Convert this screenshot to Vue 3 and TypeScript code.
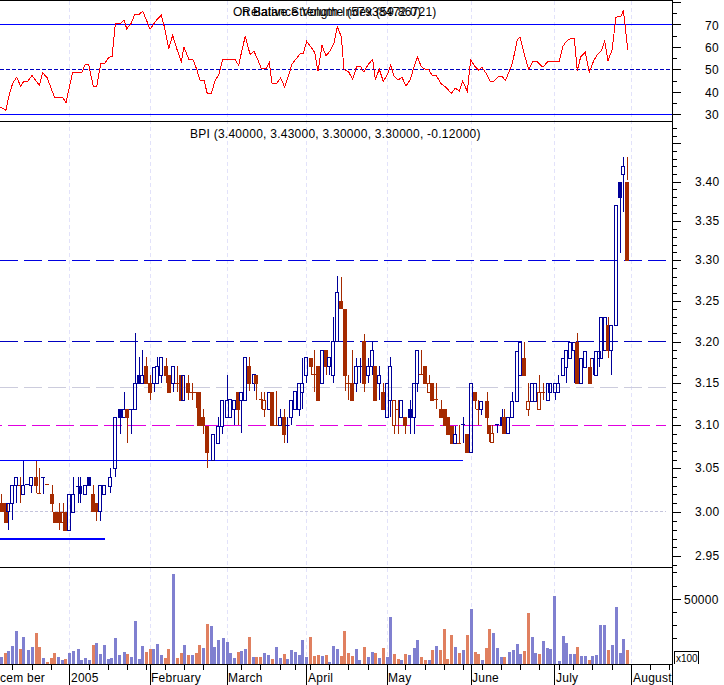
<script setup lang="ts">
type Row = [number, number, number, number, number, string]

const seg = (ox: number, oy: number, rows: Row[]) =>
  rows.map(([x, wt, wb, bt, bb, t]) => {
    const top = Math.round(oy + wt / 3)
    const bottom = Math.round(oy + wb / 3)
    const bodyTop = Math.round(oy + bt / 3)
    const bodyBottom = Math.round(oy + bb / 3)
    const hollow = t === 'h' || (t === 'o' && bodyBottom > bodyTop)
    const wicks = hollow
      ? [
          { y: top, h: bodyTop - top },
          { y: bodyBottom, h: bottom - bodyBottom },
        ].filter(w => w.h > 0)
      : [{ y: top, h: Math.max(1, bottom - top) }]
    return { x: Math.floor(ox + x / 3), bt: bodyTop, bb: bodyBottom, t, hollow, wicks }
  })

const candles = [
  ...seg(0, 330, [
    [3, 492, 544, 520, 544, 'b'], [14, 520, 575, 520, 544, 'b'], [20, 520, 575, 520, 575, 'b'], [26, 520, 600, 520, 544, 'h'],
    [37, 465, 570, 465, 520, 'h'], [48, 440, 520, 440, 465, 'h'], [60, 440, 518, 465, 465, 'o'], [70, 392, 493, 465, 493, 'h'],
    [82, 463, 465, 463, 465, 'n'], [95, 440, 490, 440, 465, 'h'], [109, 392, 490, 440, 465, 'b'], [118, 415, 490, 490, 490, 'o'],
    [129, 440, 493, 440, 440, 'n'], [141, 463, 463, 463, 463, 'o'], [158, 465, 545, 492, 518, 'b'], [165, 545, 575, 545, 575, 'b'],
    [177, 518, 600, 545, 575, 'b'], [190, 518, 575, 545, 575, 'o'], [197, 545, 600, 545, 600, 'b'], [208, 492, 600, 492, 600, 'h'],
    [220, 440, 545, 492, 545, 'h'], [235, 440, 518, 468, 468, 'n'], [242, 440, 518, 468, 490, 'f'], [255, 465, 493, 465, 493, 'h'],
    [267, 441, 465, 441, 465, 'f'], [280, 465, 544, 492, 544, 'b'], [289, 518, 572, 518, 544, 'b'], [300, 465, 572, 465, 544, 'h'],
    [312, 465, 493, 465, 493, 'h'], [332, 415, 490, 440, 467, 'h'], [345, 260, 440, 260, 415, 'h'], [360, 238, 312, 238, 260, 'f'],
    [373, 186, 262, 238, 260, 'h'], [382, 238, 338, 238, 260, 'b'], [394, 238, 312, 238, 238, 'n'], [405, 10, 238, 158, 238, 'h'],
    [419, 82, 158, 136, 158, 'f'], [427, 60, 158, 136, 158, 'h'], [438, 82, 158, 108, 158, 'b'], [452, 136, 210, 158, 185, 'b'],
    [464, 110, 185, 110, 158, 'h'], [471, 82, 158, 108, 158, 'h'], [484, 82, 158, 82, 135, 'h'], [500, 85, 158, 108, 135, 'b'],
    [507, 135, 185, 135, 185, 'b'], [519, 108, 185, 108, 158, 'h'], [532, 108, 185, 158, 158, 'o'], [545, 136, 210, 136, 210, 'b'],
    [551, 136, 210, 136, 210, 'h'], [564, 136, 210, 158, 185, 'b'], [577, 158, 210, 185, 185, 'o'], [590, 185, 235, 185, 185, 'o'],
    [598, 185, 285, 185, 285, 'b'], [610, 236, 312, 262, 285, 'b'], [623, 287, 413, 287, 365, 'b'], [640, 312, 390, 312, 390, 'h'],
    [655, 262, 338, 287, 338, 'h'], [668, 210, 312, 210, 287, 'h'], [683, 136, 260, 210, 260, 'h'], [690, 208, 262, 208, 262, 'h'],
    [703, 210, 285, 210, 238, 'h'], [716, 185, 285, 185, 236, 'b'],
  ]),
  ...seg(240, 270, [
    [3, 365, 490, 365, 390, 'h'], [15, 262, 390, 262, 390, 'h'], [29, 262, 362, 288, 338, 'b'], [43, 313, 362, 313, 338, 'h'],
    [50, 315, 390, 315, 338, 'b'], [63, 365, 416, 388, 388, 'o'], [72, 365, 440, 390, 418, 'o'], [88, 365, 418, 365, 418, 'h'],
    [96, 365, 465, 365, 465, 'b'], [108, 362, 465, 465, 465, 'o'], [120, 418, 465, 440, 465, 'h'], [133, 418, 518, 440, 492, 'b'],
    [141, 440, 518, 465, 465, 'n'], [153, 390, 465, 390, 440, 'h'], [165, 364, 418, 364, 418, 'h'], [177, 340, 438, 340, 418, 'h'],
    [187, 264, 418, 338, 365, 'h'], [199, 262, 338, 262, 316, 'h'], [213, 264, 316, 264, 288, 'b'], [223, 240, 365, 313, 313, 'o'],
    [234, 288, 390, 288, 390, 'b'], [246, 240, 338, 240, 338, 'h'], [259, 240, 316, 240, 288, 'b'], [268, 262, 316, 262, 288, 'h'],
    [280, 140, 338, 214, 316, 'h'], [291, 18, 214, 67, 214, 'h'], [304, 22, 114, 93, 114, 'b'], [315, 117, 362, 117, 315, 'b'],
    [326, 315, 390, 338, 338, 'o'], [338, 240, 390, 340, 390, 'b'], [350, 264, 365, 288, 340, 'h'], [360, 264, 340, 288, 288, 'n'],
    [372, 192, 365, 214, 340, 'b'], [384, 264, 340, 288, 316, 'h'], [397, 214, 316, 240, 288, 'h'], [405, 288, 390, 288, 390, 'b'],
    [417, 288, 390, 316, 338, 'h'], [429, 338, 416, 365, 416, 'b'], [442, 338, 440, 338, 440, 'h'], [450, 262, 440, 288, 390, 'h'],
    [463, 390, 492, 390, 465, 'o'], [475, 390, 492, 416, 416, 'o'], [483, 390, 440, 390, 440, 'h'], [497, 440, 492, 440, 465, 'b'],
    [510, 390, 492, 418, 440, 'f'], [523, 338, 492, 338, 440, 'h'], [531, 240, 365, 240, 338, 'h'], [545, 240, 315, 313, 313, 'o'],
    [555, 288, 338, 288, 338, 'b'], [568, 315, 365, 338, 365, 'o'], [576, 338, 390, 338, 390, 'b'], [589, 338, 416, 388, 388, 'o'],
    [603, 390, 440, 418, 440, 'b'], [617, 418, 465, 418, 465, 'b'], [624, 440, 492, 440, 492, 'b'], [636, 467, 518, 467, 518, 'b'],
    [645, 467, 518, 492, 518, 'h'], [659, 465, 518, 518, 518, 'o'], [669, 440, 518, 463, 463, 'n'], [681, 492, 545, 492, 545, 'b'],
    [693, 338, 545, 338, 545, 'h'], [706, 365, 416, 365, 390, 'b'], [714, 390, 465, 416, 416, 'o'],
  ]),
  ...seg(480, 140, [
    [5, 782, 825, 782, 808, 'h'], [22, 755, 855, 782, 830, 'b'], [29, 855, 905, 855, 880, 'b'], [38, 855, 905, 880, 905, 'o'],
    [52, 855, 880, 853, 853, 'n'], [66, 808, 855, 832, 855, 'f'], [74, 808, 880, 832, 880, 'b'], [86, 830, 880, 830, 880, 'h'],
    [98, 757, 830, 782, 830, 'h'], [113, 632, 782, 632, 782, 'h'], [120, 605, 705, 605, 705, 'h'], [132, 605, 705, 655, 705, 'b'],
    [145, 728, 828, 782, 808, 'o'], [158, 728, 782, 728, 782, 'h'], [165, 728, 782, 728, 782, 'h'], [178, 705, 808, 755, 808, 'o'],
    [191, 728, 780, 755, 755, 'o'], [204, 728, 780, 728, 780, 'h'], [212, 728, 755, 728, 755, 'h'], [225, 728, 780, 728, 755, 'h'],
    [236, 705, 755, 730, 755, 'h'], [250, 655, 705, 655, 705, 'h'], [258, 630, 728, 630, 680, 'h'], [270, 605, 655, 605, 655, 'h'],
    [283, 605, 728, 605, 630, 'h'], [292, 580, 728, 605, 728, 'b'], [304, 655, 728, 655, 728, 'h'], [315, 632, 680, 632, 680, 'h'],
    [332, 655, 728, 680, 728, 'b'], [340, 655, 705, 655, 655, 'n'], [348, 632, 705, 632, 705, 'h'], [358, 632, 680, 632, 655, 'h'],
    [365, 532, 655, 532, 655, 'h'], [375, 532, 630, 532, 630, 'h'], [385, 532, 655, 555, 630, 'b'], [395, 555, 705, 555, 630, 'h'],
    [408, 195, 555, 195, 555, 'h'], [420, 127, 340, 127, 170, 'f'], [430, 50, 215, 77, 103, 'h'], [441, 50, 120, 127, 360, 'b'],
  ]),
]

const colorOf = (t: string) => (t === 'b' || t === 'o' ? '#a52a00' : '#000099')

const rsiZ1: number[][] = [[0,322],[8,325],[18,331],[26,290],[38,250],[50,232],[62,259],[72,243],[84,243],[96,226],[108,242],[118,256],[128,218],[142,234],[152,262],[164,292],[188,292],[198,308],[208,262],[218,217],[246,217],[256,193],[266,193],[280,260],[290,260],[302,191],[314,191],[326,172],[336,170],[346,72],[362,70],[372,60],[380,86],[392,73],[404,44],[416,44],[428,34],[440,62],[450,88],[468,62],[484,46],[494,84],[506,146],[518,106],[530,146],[544,184],[552,142],[566,177],[578,177],[590,208],[600,241],[612,241],[622,281],[634,281],[646,240],[656,225],[668,177],[704,177],[716,196],[726,150],[736,108],[750,163],[762,154],[774,180],[784,206],[798,206],[808,188],[816,250],[830,250],[842,234],[854,262],[866,225],[876,192],[900,162],[910,160],[920,124],[944,157],[954,214],[966,136],[978,168],[990,152],[1002,130],[1012,80],[1024,110],[1032,208],[1046,216],[1058,238],[1070,199],[1082,199]]
const rsiZ2: number[][] = [[0,210],[6,216],[18,194],[32,178],[40,238],[52,208],[64,244],[76,224],[86,196],[96,228],[108,240],[120,232],[132,258],[144,240],[166,170],[178,200],[190,208],[200,208],[210,226],[222,226],[238,252],[250,260],[268,280],[280,264],[292,274],[302,244],[316,274],[326,180],[338,198],[350,211],[360,202],[372,220],[384,244],[396,244],[410,228],[420,228],[430,242],[442,214],[452,186],[466,118],[474,112],[488,168],[500,208],[512,184],[524,184],[538,198],[546,198],[558,184],[592,184],[602,140],[612,125],[626,115],[637,115],[646,212],[656,170],[670,156],[682,216],[696,180],[706,164],[718,152],[728,124],[738,182],[750,150],[762,52],[778,48],[784,30],[790,80],[797,150]]
const rsiPoints = [
  ...rsiZ1.map(([x, y]) => `${(x / 3).toFixed(1)},${(y / 3).toFixed(1)}`),
  ...rsiZ2.map(([x, y]) => `${(362 + x / 3).toFixed(1)},${(y / 3).toFixed(1)}`),
].join(' ')

type Vol = [number, number, string]
const volZ1: Vol[] = [[3,291,'b'],[16,278,'o'],[26,274,'b'],[37,258,'b'],[49,212,'b'],[62,268,'o'],[70,232,'b'],[85,270,'b'],[97,262,'b'],[109,220,'o'],[118,261,'o'],[130,294,'b'],[142,306,'o'],[154,294,'o'],[163,278,'o'],[175,291,'b'],[187,301,'b'],[197,297,'o'],[208,278,'b'],[220,272,'b'],[235,268,'b'],[243,300,'b'],[256,295,'b'],[268,300,'b'],[281,255,'o'],[289,248,'b'],[301,281,'b'],[313,255,'b'],[326,298,'b'],[335,295,'b'],[347,235,'b'],[358,286,'b'],[372,277,'b'],[382,283,'o'],[394,292,'b'],[406,183,'b'],[419,297,'b'],[427,258,'b'],[439,275,'o'],[451,268,'o'],[461,268,'b'],[472,252,'b'],[484,285,'b'],[496,295,'o'],[505,268,'o'],[520,42,'b'],[532,295,'o'],[544,278,'o'],[553,255,'b'],[565,284,'o'],[577,284,'b'],[589,278,'o'],[598,255,'o'],[610,264,'b'],[622,193,'o'],[634,198,'b'],[644,262,'b'],[655,241,'b'],[670,234,'b'],[682,245,'b'],[691,279,'b'],[703,294,'b'],[715,276,'o'],[724,274,'b'],[736,267,'b'],[748,232,'o'],[760,291,'b'],[770,291,'o'],[781,291,'o'],[793,279,'b'],[806,286,'b'],[816,298,'o'],[829,261,'b'],[841,294,'b'],[853,281,'o'],[862,297,'b'],[874,270,'b'],[886,275,'b'],[898,284,'b'],[907,241,'b'],[919,290,'b'],[932,232,'o'],[943,289,'o'],[955,286,'o'],[967,289,'b'],[979,284,'o'],[988,306,'b'],[1000,258,'b'],[1012,267,'b'],[1025,288,'o'],[1033,212,'o'],[1045,280,'o'],[1057,288,'o'],[1069,268,'b'],[1079,300,'b']]
const volZ2: Vol[] = [[7,262,'o'],[19,292,'b'],[31,276,'b'],[40,278,'o'],[52,294,'b'],[64,264,'o'],[77,291,'b'],[85,172,'b'],[97,281,'o'],[109,298,'o'],[118,300,'b'],[130,283,'o'],[142,286,'b'],[157,264,'b'],[166,241,'b'],[178,292,'o'],[190,300,'o'],[202,300,'b'],[211,270,'o'],[223,258,'b'],[235,270,'o'],[247,208,'o'],[256,297,'o'],[268,226,'o'],[280,262,'b'],[292,278,'o'],[304,271,'b'],[316,225,'o'],[328,147,'b'],[340,277,'o'],[350,281,'o'],[361,300,'b'],[373,264,'o'],[382,208,'o'],[394,219,'b'],[406,264,'b'],[418,292,'b'],[428,291,'o'],[442,276,'b'],[454,270,'b'],[466,252,'b'],[476,281,'b'],[487,274,'o'],[499,159,'o'],[511,231,'b'],[520,278,'b'],[532,281,'o'],[544,244,'b'],[556,264,'b'],[566,267,'b'],[577,109,'b'],[592,303,'b'],[604,228,'b'],[613,248,'b'],[625,283,'b'],[637,281,'b'],[646,261,'o'],[658,288,'b'],[670,288,'b'],[683,300,'o'],[691,288,'b'],[703,285,'b'],[715,196,'b'],[727,196,'b'],[739,270,'o'],[751,255,'b'],[763,142,'b'],[775,278,'b'],[784,238,'b'],[796,270,'o']]
const volume = [
  ...volZ1.map(([x, y, c]) => ({ x: Math.floor(x / 3) - 1, y: Math.round(560 + y / 3), c })),
  ...volZ2.map(([x, y, c]) => ({ x: Math.floor(362 + x / 3) - 1, y: Math.round(560 + y / 3), c })),
]

const months = [69.5, 150.5, 227.5, 306.5, 387.5, 471.5, 554.5, 631.5]
const dateMinor = [
  ...[37, 97, 154, 268, 325, 382, 439, 495, 553, 610, 725, 782, 840, 886, 930, 988, 1045].map(z => Math.floor(z / 3) + 0.5),
  ...[18, 130, 190, 247, 304, 360, 418, 475, 532, 592, 635, 692, 750, 866, 922].map(z => Math.floor(362 + z / 3) + 0.5),
]
const dateLabels: [string, number][] = [
  ['cem ber', 0], ['2005', 71], ['February', 151], ['March', 228], ['April', 308],
  ['May', 388], ['June', 472], ['July', 556], ['August', 633],
]

const priceY = (p: number) => 181.7 + 2639 * Math.log(3.4 / p)
const priceTicks: { y: number; major: boolean }[] = []
for (let c = 292; c <= 347; c++) {
  const y = Math.round(priceY(c / 100)) + 0.5
  if (y > 122 && y < 567) priceTicks.push({ y, major: c % 5 === 0 })
}
const priceLabels = ['3.40', '3.35', '3.30', '3.25', '3.20', '3.15', '3.10', '3.05', '3.00', '2.95'].map(t => ({
  t,
  y: Math.round(priceY(Number(t))) + 4,
}))
const rsiTicks = [
  [2.5, 1], [13.5, 0], [24.5, 1], [36.5, 0], [47.5, 1], [58.5, 0], [69.5, 1], [81.5, 0], [92.5, 1], [103.5, 0], [114.5, 1],
].map(([y, m]) => ({ y, major: m === 1 }))
const rsiLabels = [['70', 30], ['60', 52], ['50', 74], ['40', 97], ['30', 119]] as [string, number][]
const volTicks = [
  [572.5, 0], [586.5, 0], [599.5, 1], [612.5, 0], [625.5, 0], [638.5, 0],
].map(([y, m]) => ({ y, major: m === 1 }))
</script>

<template>
  <svg class="chart" width="724" height="685" viewBox="0 0 724 685" xmlns="http://www.w3.org/2000/svg">
    <rect width="724" height="685" fill="#ffffff" />

    <g class="crisp">
      <line v-for="m in months" :key="'g' + m" :x1="m" :x2="m" y1="1" y2="664" class="grid" />

      <line x1="0" x2="672" y1="24.5" y2="24.5" class="solid-blue" />
      <line x1="0" x2="672" y1="114.5" y2="114.5" class="solid-blue" />
      <line x1="0" x2="672" y1="69.5" y2="69.5" class="rsi-mid" />
      <polyline :points="rsiPoints" class="rsi" />
    </g>

    <text x="233" y="16" class="label">On Balance Volume (57938472.0)</text>
    <text x="242" y="16" class="label">Relative Strength Index (59.86721)</text>

    <text x="190" y="138" class="label">BPI (3.40000, 3.43000, 3.30000, 3.30000, -0.12000)</text>

    <g class="crisp">
      <line x1="0" x2="666" y1="260.5" y2="260.5" class="dash dash-bright" />
      <line x1="0" x2="666" y1="341.5" y2="341.5" class="dash dash-dark" />
      <line x1="0" x2="666" y1="387.5" y2="387.5" class="dash dash-gray" />
      <line x1="0" x2="666" y1="425.5" y2="425.5" class="dash dash-magenta" />
      <line x1="0" x2="666" y1="511.5" y2="511.5" class="dots" />
      <line x1="0" x2="463" y1="460.5" y2="460.5" class="solid-blue" />
      <rect x="0" y="538" width="105" height="2" fill="#0000ff" />

      <g v-for="(c, i) in candles" :key="'c' + i">
        <rect
          v-for="w in c.wicks"
          :key="w.y"
          :x="c.x"
          :y="w.y"
          width="1"
          :height="w.h"
          :fill="colorOf(c.t)"
        />
        <rect
          v-if="c.hollow"
          :x="c.x - 1.5"
          :y="c.bt + 0.5"
          width="3"
          :height="c.bb - c.bt"
          fill="none"
          :stroke="colorOf(c.t)"
        />
        <rect
          v-else-if="c.t === 'b' || c.t === 'f'"
          :x="c.x - 2"
          :y="c.bt"
          width="4"
          :height="c.bb - c.bt + 1"
          :fill="colorOf(c.t)"
        />
        <rect v-else :x="c.x - 2" :y="c.bt" width="4" height="1" :fill="colorOf(c.t)" />
      </g>

      <rect
        v-for="(v, i) in volume"
        :key="'v' + i"
        :x="v.x"
        :y="v.y"
        width="3"
        :height="664 - v.y"
        :fill="v.c === 'b' ? '#8080d0' : '#e08060'"
      />

      <line x1="0" x2="672" y1="0.5" y2="0.5" class="ink" />
      <line x1="0" x2="672" y1="121.5" y2="121.5" class="ink" />
      <line x1="0" x2="672" y1="567.5" y2="567.5" class="ink" />
      <line x1="0" x2="672" y1="664.5" y2="664.5" class="ink" />
      <line x1="672.5" x2="672.5" y1="0" y2="685" class="ink" />

      <line v-for="t in rsiTicks" :key="'r' + t.y" x1="673" :x2="t.major ? 681 : 677" :y1="t.y" :y2="t.y" class="ink" />
      <line v-for="t in priceTicks" :key="'p' + t.y" x1="673" :x2="t.major ? 681 : 677" :y1="t.y" :y2="t.y" class="ink" />
      <line v-for="t in volTicks" :key="'t' + t.y" x1="673" :x2="t.major ? 681 : 677" :y1="t.y" :y2="t.y" class="ink" />

      <line v-for="m in months" :key="'m' + m" :x1="m" :x2="m" y1="665" y2="685" class="ink" />
      <line v-for="x in dateMinor" :key="'d' + x" :x1="x" :x2="x" y1="665" y2="670" class="ink" />

      <path d="M674.5 664V651.5H698.5V664" fill="none" stroke="#000000" />
    </g>

    <text v-for="l in rsiLabels" :key="l[0]" x="705" :y="l[1]" class="label">{{ l[0] }}</text>
    <text v-for="p in priceLabels" :key="p.t" x="695" :y="p.y" class="label">{{ p.t }}</text>
    <text x="684" y="604" class="label">50000</text>
    <text x="676" y="662" class="small">x100</text>
    <text v-for="d in dateLabels" :key="d[0]" :x="d[1]" y="682" class="label">{{ d[0] }}</text>
  </svg>
</template>

<style scoped>
.chart {
  display: block;
}
.crisp {
  shape-rendering: crispEdges;
}
.grid {
  stroke: #e2e2fa;
  stroke-dasharray: 4 3;
}
.solid-blue {
  stroke: #0000ff;
}
.rsi-mid {
  stroke: #0000c0;
  stroke-dasharray: 4 2;
}
.rsi {
  fill: none;
  stroke: #ff0000;
  stroke-width: 1;
}
.dash {
  stroke-dasharray: 18 6;
}
.dash-bright {
  stroke: #0000e0;
}
.dash-dark {
  stroke: #0000c0;
}
.dash-gray {
  stroke: #ccccdd;
}
.dash-magenta {
  stroke: #e000e0;
  stroke-dashoffset: 16;
}
.dots {
  stroke: #c4c4dc;
  stroke-dasharray: 3 2;
}
.ink {
  stroke: #000000;
}
.label {
  font-family: "Liberation Sans", Arial, sans-serif;
  font-size: 12px;
  letter-spacing: 0.25px;
  fill: #000000;
}
.small {
  font-family: "Liberation Sans", Arial, sans-serif;
  font-size: 10px;
  fill: #000000;
}
</style>
